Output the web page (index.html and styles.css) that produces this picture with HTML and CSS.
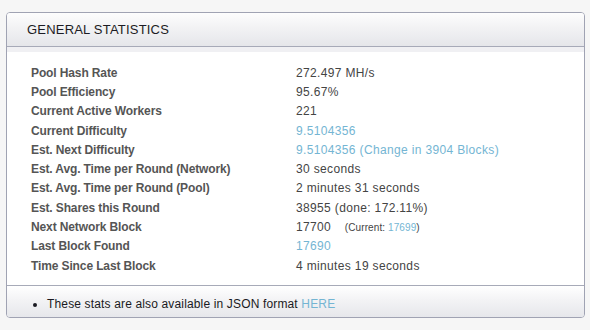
FILE: index.html
```html
<!DOCTYPE html>
<html>
<head>
<meta charset="utf-8">
<link rel="stylesheet" href="styles.css">
</head>
<body>
<div class="box">
  <div class="box-head"><h3 class="title">GENERAL STATISTICS</h3></div>
  <div class="box-body">
    <div class="stats">
      <div class="label">Pool Hash Rate</div><div class="value">272.497 MH/s</div>
      <div class="label">Pool Efficiency</div><div class="value">95.67%</div>
      <div class="label">Current Active Workers</div><div class="value">221</div>
      <div class="label">Current Difficulty</div><div class="value"><a class="link" href="#">9.5104356</a></div>
      <div class="label">Est. Next Difficulty</div><div class="value"><a class="link" href="#">9.5104356 (Change in 3904 Blocks)</a></div>
      <div class="label">Est. Avg. Time per Round (Network)</div><div class="value">30 seconds</div>
      <div class="label">Est. Avg. Time per Round (Pool)</div><div class="value">2 minutes 31 seconds</div>
      <div class="label">Est. Shares this Round</div><div class="value">38955 (done: 172.11%)</div>
      <div class="label">Next Network Block</div><div class="value">17700 <span class="small">(Current: <a class="link" href="#">17699</a>)</span></div>
      <div class="label">Last Block Found</div><div class="value"><a class="link" href="#">17690</a></div>
      <div class="label">Time Since Last Block</div><div class="value">4 minutes 19 seconds</div>
    </div>
  </div>
  <div class="box-foot">
    <ul class="notes">
      <li>These stats are also available in JSON format <a class="link" href="#">HERE</a></li>
    </ul>
  </div>
</div>
</body>
</html>
```

FILE: styles.css
```css
html, body {
  margin: 0;
  padding: 0;
  background: #f6f6f6;
}
body {
  padding: 12px 5px 0 6px;
  font-family: "Liberation Sans", Arial, sans-serif;
}
.box {
  border: 1px solid #a0a3b3;
  border-radius: 4px;
  background: #fff;
  width: 577px;
  overflow: hidden;
}
.box-head {
  height: 33px;
  border-bottom: 1px solid #a7aab8;
  background: linear-gradient(to bottom, #fdfdfd 0%, #f2f2f4 45%, #e5e6ea 100%);
}
.title {
  margin: 0;
  padding-left: 20px;
  font-size: 13px;
  font-weight: normal;
  letter-spacing: 0.2px;
  line-height: 34px;
  color: #1c1c24;
}
.box-body {
  border-top: 5px solid #f0f0f3;
  padding: 11px 0 10px 24px;
}
.stats {
  display: grid;
  grid-template-columns: 265px 1fr;
  grid-auto-rows: 19.3px;
  align-items: center;
  font-size: 12px;
}
.label {
  font-weight: bold;
  color: #555;
  letter-spacing: -0.12px;
}
.value {
  color: #444;
  letter-spacing: 0.35px;
}
.small {
  font-size: 10px;
  margin-left: 10px;
  letter-spacing: 0.1px;
}
.link {
  color: #74b5d3;
  text-decoration: none;
}
.box-foot {
  border-top: 1px solid #a7aab8;
  height: 31px;
  background: linear-gradient(to bottom, #ffffff 0%, #f3f3f5 45%, #e6e7eb 100%);
}
.notes {
  margin: 0;
  padding: 11px 0 0 40px;
  font-size: 12px;
  line-height: 15px;
  letter-spacing: 0.15px;
  color: #1a1a22;
}
```
